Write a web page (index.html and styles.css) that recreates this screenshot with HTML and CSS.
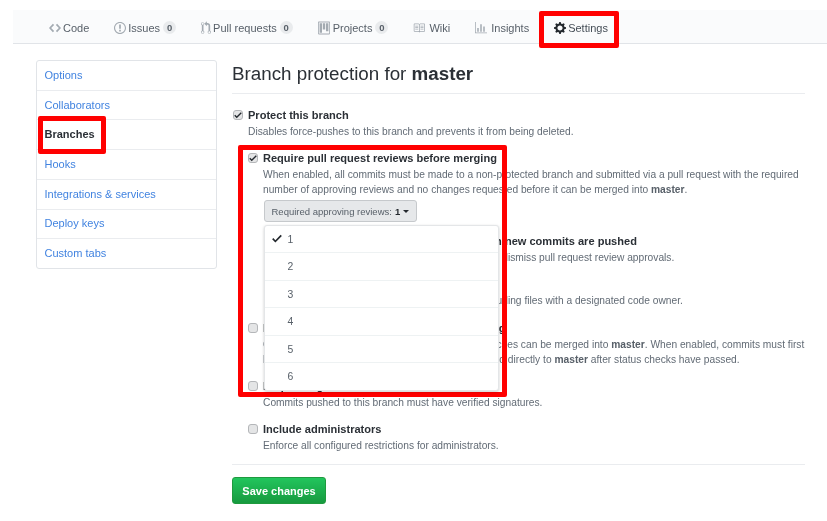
FILE: index.html
```html
<!DOCTYPE html>
<html lang="en">
<head>
<meta charset="utf-8">
<title>Branch protection for master</title>
<link rel="stylesheet" href="styles.css">
</head>
<body>
<nav class="tabnav">
  <a class="tab tab-code"><svg class="ic" width="12" height="14" viewBox="0 0 14 16"><path d="M9.5 3L8 4.5 11.5 8 8 11.5 9.5 13 14 8 9.5 3zm-5 0L0 8l4.5 5L6 11.5 2.5 8 6 4.5 4.5 3z"/></svg>Code</a>
  <a class="tab tab-issues"><svg class="ic" width="12" height="14" viewBox="0 0 14 16"><path d="M7 2.3c3.14 0 5.7 2.56 5.7 5.7s-2.56 5.7-5.7 5.7A5.71 5.71 0 0 1 1.3 8c0-3.14 2.56-5.7 5.7-5.7zM7 1C3.14 1 0 4.14 0 8s3.14 7 7 7 7-3.14 7-7-3.14-7-7-7zm1 3H6v5h2V4zm0 6H6v2h2v-2z"/></svg>Issues<span class="counter">0</span></a>
  <a class="tab tab-pulls"><svg class="ic" width="10" height="14" viewBox="0 0 12 16"><path d="M11 11.28V5c-.03-.78-.34-1.47-.94-2.06C9.46 2.35 8.78 2.03 8 2H7V0L4 3l3 3V4h1c.27.02.48.11.69.31.21.2.3.42.31.69v6.28A1.993 1.993 0 0 0 10 15a1.993 1.993 0 0 0 1-3.72zm-1 2.92c-.66 0-1.2-.55-1.2-1.2 0-.65.55-1.2 1.2-1.2.65 0 1.2.55 1.2 1.2 0 .65-.55 1.2-1.2 1.2zM4 3c0-1.11-.89-2-2-2a1.993 1.993 0 0 0-1 3.72v6.56A1.993 1.993 0 0 0 2 15a1.993 1.993 0 0 0 1-3.72V4.72c.59-.34 1-.98 1-1.72zm-.8 10c0 .66-.55 1.2-1.2 1.2-.65 0-1.2-.55-1.2-1.2 0-.65.55-1.2 1.2-1.2.65 0 1.2.55 1.2 1.2zM2 4.2C1.34 4.2.8 3.65.8 3c0-.65.55-1.2 1.2-1.2.65 0 1.2.55 1.2 1.2 0 .65-.55 1.2-1.2 1.2z"/></svg>Pull requests<span class="counter">0</span></a>
  <a class="tab tab-projects"><svg class="ic ic-wide" width="12" height="14" viewBox="0 0 15 16"><path d="M10 12h3V2h-3v10zm-4-2h3V2H6v8zm-4 4h3V2H2v12zm-1 1h13V1H1v14zM14 0H1a1 1 0 0 0-1 1v14a1 1 0 0 0 1 1h13a1 1 0 0 0 1-1V1a1 1 0 0 0-1-1z"/></svg>Projects<span class="counter">0</span></a>
  <a class="tab tab-wiki"><svg class="ic ic-wider" width="12" height="14" viewBox="0 0 16 16"><path d="M3 5h4v1H3V5zm0 3h4V7H3v1zm0 2h4V9H3v1zm11-5h-4v1h4V5zm0 2h-4v1h4V7zm0 2h-4v1h4V9zm2-6v9c0 .55-.45 1-1 1H9.5l-1 1-1-1H2c-.55 0-1-.45-1-1V3c0-.55.45-1 1-1h5.5l1 1 1-1H15c.55 0 1 .45 1 1zm-8 .5L7.5 3H2v9h6V3.5zm7-.5H9.5l-.5.5V12h6V3z"/></svg>Wiki</a>
  <a class="tab tab-insights"><svg class="ic ic-wider" width="12" height="14" viewBox="0 0 16 16"><path d="M16 14v1H0V0h1v14h15zM5 13H3V8h2v5zm4 0H7V3h2v10zm4 0h-2V6h2v7z"/></svg>Insights</a>
  <a class="tab tab-settings"><svg class="ic ic-dark" width="12" height="14" viewBox="0 0 14 16"><path d="M14 8.77v-1.6l-1.94-.64-.45-1.09.88-1.84-1.13-1.13-1.81.91-1.09-.45-.69-1.92h-1.6l-.63 1.94-1.11.45-1.84-.88-1.13 1.13.91 1.81-.45 1.09L0 7.23v1.59l1.94.64.45 1.09-.88 1.84 1.13 1.13 1.81-.91 1.09.45.69 1.92h1.59l.63-1.94 1.11-.45 1.84.88 1.13-1.13-.92-1.81.47-1.09L14 8.75v.02zM7 11c-1.66 0-3-1.34-3-3s1.34-3 3-3 3 1.34 3 3-1.34 3-3 3z"/></svg>Settings</a>
</nav>

<div class="page">
  <aside class="side">
    <a class="side-item">Options</a>
    <a class="side-item">Collaborators</a>
    <a class="side-item current">Branches</a>
    <a class="side-item">Hooks</a>
    <a class="side-item">Integrations &amp; services</a>
    <a class="side-item">Deploy keys</a>
    <a class="side-item">Custom tabs</a>
  </aside>

  <main class="main">
    <h2 class="title">Branch protection for <strong>master</strong></h2>

    <div class="opt">
      <span class="box"><svg width="8" height="10" viewBox="0 0 12 16"><path d="M12 5l-8 8-4-4 1.500-1.500L4 10l6.500-6.500L12 5z"/></svg></span>
      <div class="opt-body">
        <div class="label">Protect this branch</div>
        <p class="note">Disables force-pushes to this branch and prevents it from being deleted.</p>
      </div>
    </div>

    <div class="sub">
      <div class="opt">
        <span class="box"><svg width="8" height="10" viewBox="0 0 12 16"><path d="M12 5l-8 8-4-4 1.500-1.500L4 10l6.500-6.500L12 5z"/></svg></span>
        <div class="opt-body">
          <div class="label">Require pull request reviews before merging</div>
          <p class="note">When enabled, all commits must be made to a non-protected branch and submitted via a pull request with the required number of approving reviews and no changes requested before it can be merged into <strong>master</strong>.</p>
          <div class="select-wrap">
            <button class="select-btn" type="button">Required approving reviews: <strong>1</strong><span class="caret"></span></button>
            <div class="menu">
              <div class="menu-item"><svg class="menu-check" width="10" height="13" viewBox="0 0 12 16"><path d="M12 5l-8 8-4-4 1.500-1.500L4 10l6.500-6.500L12 5z"/></svg>1</div>
              <div class="menu-item">2</div>
              <div class="menu-item">3</div>
              <div class="menu-item">4</div>
              <div class="menu-item">5</div>
              <div class="menu-item">6</div>
            </div>
          </div>
          <div class="opt">
            <span class="box"></span>
            <div class="opt-body">
              <div class="label">Dismiss stale pull request approvals when new commits are pushed</div>
              <p class="note">New reviewable commits pushed to a branch will dismiss pull request review approvals.</p>
            </div>
          </div>
          <div class="opt">
            <span class="box"></span>
            <div class="opt-body">
              <div class="label">Require review from Code Owners</div>
              <p class="note">Require an approved review in pull requests including files with a designated code owner.</p>
            </div>
          </div>
        </div>
      </div>

      <div class="opt opt-status">
        <span class="box"></span>
        <div class="opt-body">
          <div class="label">Require status checks to pass before merging</div>
          <p class="note">Choose which status checks must pass before branches can be merged into <strong>master</strong>. When enabled, commits must first be pushed to another branch, then merged or pushed directly to <strong>master</strong> after status checks have passed.</p>
        </div>
      </div>

      <div class="opt">
        <span class="box"></span>
        <div class="opt-body">
          <div class="label">Require signed commits</div>
          <p class="note">Commits pushed to this branch must have verified signatures.</p>
        </div>
      </div>

      <div class="opt">
        <span class="box"></span>
        <div class="opt-body">
          <div class="label">Include administrators</div>
          <p class="note">Enforce all configured restrictions for administrators.</p>
        </div>
      </div>
    </div>

    <hr class="rule">
    <button class="save" type="button">Save changes</button>
  </main>
</div>

<div class="mark mark-settings"></div>
<div class="mark mark-branches"></div>
<div class="mark mark-reviews"></div>
</body>
</html>
```
FILE: styles.css
```css
* { box-sizing: border-box; }

html, body {
  margin: 0;
  padding: 0;
  background: #fff;
}

body {
  position: relative;
  width: 827px;
  height: 521px;
  overflow: hidden;
  font-family: "Liberation Sans", Arial, sans-serif;
  font-size: 11px;
  color: #2b3036;
  filter: blur(.4px);
}

.tabnav {
  display: flex;
  align-items: center;
  height: 34px;
  margin: 10px 0 0 13px;
  padding: 2px 0 0 36px;
  background: #fafbfc;
  border-bottom: 1px solid #e1e4e8;
  color: #586069;
}

.tab {
  display: flex;
  align-items: center;
  white-space: nowrap;
  font-size: 11px;
}

.ic {
  fill: #a3aab1;
  fill-rule: evenodd;
  margin-right: 2px;
}

.ic-wide { margin-right: 3px; }
.ic-wider { margin-right: 4px; }
.ic-dark { fill: #24292e; }

.tab-issues,
.tab-pulls,
.tab-projects,
.tab-wiki,
.tab-insights,
.tab-settings { margin-left: 25px; }
.tab-settings { color: #444d56; }

.counter {
  display: inline-block;
  min-width: 13px;
  height: 13px;
  margin-left: 3px;
  border-radius: 7px;
  background: #e9ebed;
  color: #586069;
  font-size: 9.500px;
  font-weight: bold;
  line-height: 13px;
  text-align: center;
}

.page {
  display: flex;
  gap: 15px;
  margin: 16px 0 0 36px;
}

.side {
  display: flex;
  flex-direction: column;
  flex: none;
  width: 181px;
  height: 209px;
  border: 1px solid #e1e4e8;
  border-radius: 3px;
}

.side-item {
  display: flex;
  align-items: center;
  flex: 1;
  padding: 0 0 1px 7.500px;
  border-bottom: 1px solid #eaecef;
  color: #4183e0;
  font-size: 11px;
}

.side-item:last-child { border-bottom: 0; }
.side-item.current { color: #2b3036; font-weight: bold; }

.main {
  flex: none;
  width: 573px;
}

.title {
  height: 34px;
  margin: 0 0 13px;
  border-bottom: 1px solid #eaecef;
  font-size: 18.800px;
  font-weight: normal;
  line-height: 28px;
}

.opt {
  display: flex;
  margin-top: 11px;
}

.title + .opt { margin-top: 0; }
.opt-status { margin-top: 12px; }

.box {
  display: flex;
  align-items: center;
  justify-content: center;
  flex: none;
  width: 10px;
  height: 10px;
  margin: 3px 5px 0 1px;
  border: 1px solid #b4b6b9;
  border-radius: 3px;
  background: #e4e5e6;
}

.box svg { fill: #24292e; }

.opt-body { flex: 1; min-width: 0; }

.label {
  height: 16px;
  font-weight: bold;
  font-size: 11.050px;
  line-height: 16px;
}

.note {
  margin: 1px 0 0;
  color: #626b75;
  font-size: 10.220px;
  line-height: 15px;
}

.note strong { color: #586069; }

.sub { margin: 11px 0 0 15px; }
.sub > .opt:first-child { margin-top: 0; }

.select-wrap {
  position: relative;
  margin: 3px 0 0 .5px;
}

.select-btn {
  display: flex;
  align-items: center;
  height: 22px;
  padding: 0 7px;
  border: 1px solid #c6c9cc;
  border-radius: 3px;
  background: #e6e8ea;
  color: #586069;
  font-family: inherit;
  font-size: 9.500px;
}

.select-btn strong {
  margin-left: 3px;
  color: #24292e;
}

.caret {
  width: 0;
  height: 0;
  margin-left: 3px;
  border: 3px solid transparent;
  border-top-color: #24292e;
  border-bottom: 0;
}

.menu {
  position: absolute;
  z-index: 2;
  top: 25px;
  left: 0;
  width: 235px;
  border: 1px solid #e4e6e8;
  border-radius: 3px;
  background: #fff;
  box-shadow: 0 1px 3px rgba(0, 0, 0, .2);
}

.menu-item {
  position: relative;
  height: 27.400px;
  padding-left: 23px;
  border-bottom: 1px solid #eef2f3;
  color: #586069;
  font-size: 10.400px;
  line-height: 27px;
}

.menu-item:last-child { border-bottom: 0; }

.menu-check {
  position: absolute;
  left: 7.500px;
  top: 6px;
  fill: #24292e;
}

.rule {
  height: 1px;
  margin: 11px 0 12px;
  border: 0;
  background: #eaecef;
}

.save {
  display: block;
  width: 94px;
  height: 27px;
  padding: 0;
  border: 1px solid #1f9a3e;
  border-radius: 3px;
  background: linear-gradient(#22c55d, #179a3f);
  color: #fff;
  font-family: inherit;
  font-size: 11px;
  font-weight: bold;
}

.mark {
  position: absolute;
  border: 5px solid #f00;
  border-radius: 2px;
  pointer-events: none;
}

.mark-settings { left: 539px; top: 11px; width: 80px; height: 37px; }
.mark-branches { left: 38px; top: 116px; width: 68px; height: 38px; }
.mark-reviews { left: 238px; top: 145px; width: 269px; height: 252px; }
```
